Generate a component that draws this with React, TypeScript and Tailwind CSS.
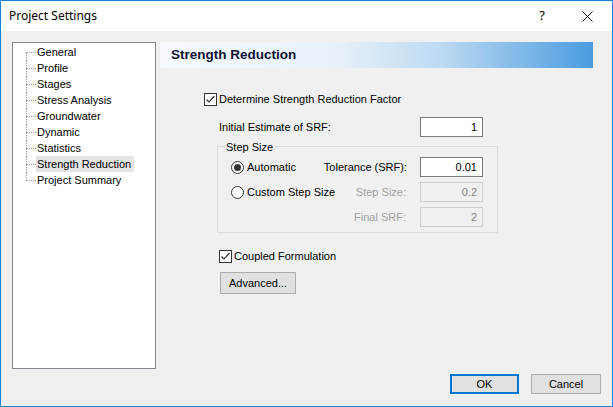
import React from 'react';

const treeItems = [
  'General',
  'Profile',
  'Stages',
  'Stress Analysis',
  'Groundwater',
  'Dynamic',
  'Statistics',
  'Strength Reduction',
  'Project Summary',
];

function Checkbox() {
  return (
    <div className="flex h-[13px] w-[13px] items-center justify-center border border-[#333333] bg-white">
      <svg width="11" height="11" viewBox="0 0 11 11">
        <path d="M1.5 5.5 L4 8 L9.5 2" fill="none" stroke="#333333" strokeWidth="1.2" />
      </svg>
    </div>
  );
}

function Radio({ checked }: { checked?: boolean }) {
  return (
    <div className="flex h-[13px] w-[13px] items-center justify-center rounded-full border border-[#333333] bg-white">
      {checked && <div className="h-[7px] w-[7px] rounded-full bg-[#333333]" />}
    </div>
  );
}

function NumBox({ value, disabled }: { value: string; disabled?: boolean }) {
  return (
    <div
      className={
        disabled
          ? 'flex h-[20px] w-[63px] items-center justify-end border border-[#cccccc] bg-[#f0f0f0] pr-[5px] text-[#838383]'
          : 'flex h-[20px] w-[63px] items-center justify-end border border-[#7a7a7a] bg-white pr-[5px]'
      }
    >
      {value}
    </div>
  );
}

function TreeRow({ label, index, last }: { label: string; index: number; last: boolean }) {
  const selected = label === 'Strength Reduction';
  return (
    <div className="flex h-4 items-stretch">
      <div className="ml-[13px] flex w-[10px] flex-col">
        <div className={index === 0 ? 'h-2' : 'h-2 border-l border-dotted border-[#a0a0a0]'} />
        <div
          className={
            last
              ? 'h-2 border-t border-dotted border-[#a0a0a0]'
              : 'h-2 border-l border-t border-dotted border-[#a0a0a0]'
          }
        />
      </div>
      <div className={selected ? 'flex items-center bg-[#e5e5e5] px-[1px] pr-[3px]' : 'flex items-center px-[1px]'}>
        {label}
      </div>
    </div>
  );
}

export default function App() {
  return (
    <div
      className="flex h-[407px] w-[613px] flex-col border border-[#1883d7] bg-[#f0f0f0] text-[11px] text-black"
      style={{ fontFamily: '"Liberation Sans", Arial, sans-serif' }}
    >
      {/* title bar */}
      <div className="flex h-[30px] items-center bg-white" style={{ fontFamily: '"Noto Sans", sans-serif' }}>
        <div className="ml-[8px] text-[12px]">Project Settings</div>
        <div className="ml-auto mr-[37px] text-[13px]">?</div>
        <svg className="mr-[19px]" width="11" height="11" viewBox="0 0 11 11">
          <path d="M0.5 0.5 L10.5 10.5 M10.5 0.5 L0.5 10.5" stroke="#111" strokeWidth="1" />
        </svg>
      </div>

      <div className="flex pl-[11px] pt-[11px]">
        {/* tree */}
        <div className="h-[327px] w-[144px] border border-[#828790] bg-white pt-[1px]">
          {treeItems.map((t, i) => (
            <TreeRow key={t} label={t} index={i} last={i === treeItems.length - 1} />
          ))}
        </div>

        {/* right pane */}
        <div className="flex flex-col">
          <div
            className="ml-[4px] flex h-[26px] w-[433px] items-center pl-[11px] text-[13.5px] font-bold text-[#111133]"
            style={{ background: 'linear-gradient(to right, #f7fafd 0%, #e8f1f9 40%, #bcdaf2 65%, #4a9be0 100%)' }}
          >
            Strength Reduction
          </div>

          <div className="ml-[48px] mt-[24px] flex h-[14px] items-center gap-[2px]">
            <Checkbox />
            <span>Determine Strength Reduction Factor</span>
          </div>

          <div className="ml-[63px] mt-[11px] flex w-[264px] items-center justify-between">
            <span>Initial Estimate of SRF:</span>
            <NumBox value="1" />
          </div>

          {/* group box */}
          <div className="relative ml-[61px] mt-[9px] h-[87px] w-[281px] border border-[#dcdcdc] pl-[13px] pt-[10px]">
            <div className="absolute left-[6px] top-[-8px] bg-[#f0f0f0] px-[2px]">Step Size</div>
            <div className="flex h-[20px] items-center">
              <Radio checked />
              <span className="ml-[3px]">Automatic</span>
              <span className="ml-auto mr-[13px]">Tolerance (SRF):</span>
              <div className="mr-[14px]">
                <NumBox value="0.01" />
              </div>
            </div>
            <div className="mt-[5px] flex h-[20px] items-center">
              <Radio />
              <span className="ml-[3px]">Custom Step Size</span>
              <span className="ml-auto mr-[14px] text-[#a0a0a0]">Step Size:</span>
              <div className="mr-[14px]">
                <NumBox value="0.2" disabled />
              </div>
            </div>
            <div className="mt-[5px] flex h-[20px] items-center">
              <span className="ml-auto mr-[14px] text-[#a0a0a0]">Final SRF:</span>
              <div className="mr-[14px]">
                <NumBox value="2" disabled />
              </div>
            </div>
          </div>

          <div className="ml-[63px] mt-[16px] flex h-[14px] items-center gap-[2px]">
            <Checkbox />
            <span>Coupled Formulation</span>
          </div>

          <div className="ml-[64px] mt-[9px] flex h-[22px] w-[76px] items-center justify-center border border-[#adadad] bg-[#e1e1e1]">
            Advanced...
          </div>
        </div>
      </div>

      {/* footer */}
      <div className="mr-[11px] mt-[5px] flex justify-end gap-[12px]">
        <div className="flex h-[20px] w-[69px] items-center justify-center border-2 border-[#0078d7] bg-[#e1e1e1]">
          OK
        </div>
        <div className="flex h-[20px] w-[70px] items-center justify-center border border-[#adadad] bg-[#e1e1e1]">
          Cancel
        </div>
      </div>
    </div>
  );
}
